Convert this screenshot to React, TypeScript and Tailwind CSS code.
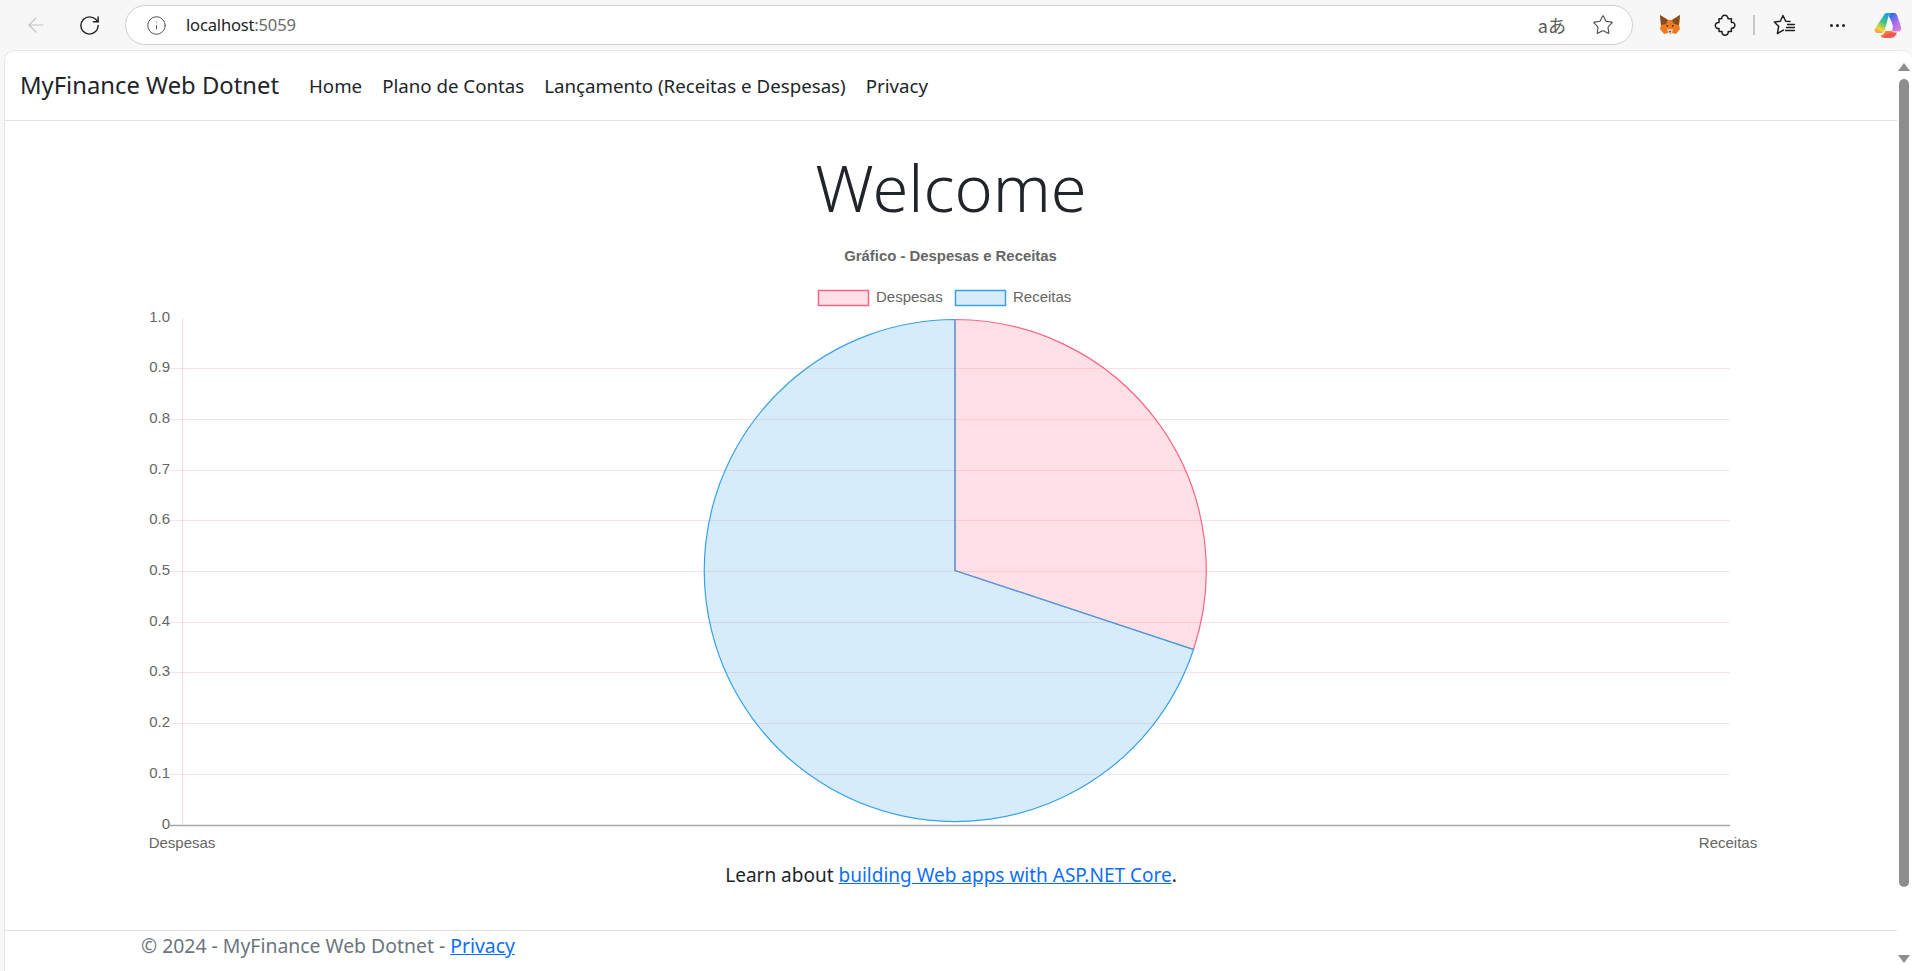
import React from 'react';
import { ArrowLeft, RotateCw, Info, Star } from 'lucide-react';

const ticks = ['1.0', '0.9', '0.8', '0.7', '0.6', '0.5', '0.4', '0.3', '0.2', '0.1', '0'];
const axisTop = 318.5;
const step = 50.7;

const FoxIcon = () => (
  <svg width="22" height="22" viewBox="0 0 22 22">
    <polygon points="1,1 9,6 13,6 21,1 20,11 21,15 17,20 13,19 9,19 5,20 1,15 2,11" fill="#ee7a1e" />
    <polygon points="1,1 9,6 7,10 2,11" fill="#8a4a1f" />
    <polygon points="21,1 13,6 15,10 20,11" fill="#8a4a1f" />
    <polygon points="5,11 9,12 8,15" fill="#f6851b" />
    <polygon points="17,11 13,12 14,15" fill="#f6851b" />
    <polygon points="8,15 14,15 13,19 11,21 9,19" fill="#e4c9b0" />
    <polygon points="10,17 12,17 11,19" fill="#2f2f2f" />
    <polygon points="7,11 9,11 9,13 8,13" fill="#5a3a20" />
    <polygon points="15,11 13,11 13,13 14,13" fill="#5a3a20" />
  </svg>
);

// puzzle piece, bumps on all four sides
const ExtensionIcon = () => (
  <svg width="22" height="22" viewBox="0 0 22 22" fill="none" stroke="#1f1f1f" strokeWidth="1.500" strokeLinejoin="round">
    <path d="M7.600 4.800C7.400 2.800 9 1.300 10.800 1.300s3.400 1.500 3.200 3.500h3.400v3.600c1.900-.4 3.500 1 3.500 2.900s-1.600 3.300-3.500 2.900v3.400h-3.200c.3 2-1.200 3.600-3.100 3.600s-3.400-1.600-3.100-3.600H5v-3.100c-2 .3-3.700-1.100-3.700-3s1.700-3.300 3.700-3V4.800z" />
  </svg>
);

const FavoritesIcon = () => (
  <svg width="24" height="22" viewBox="0 0 24 22" fill="none" stroke="#1f1f1f" strokeWidth="1.500" strokeLinejoin="round" strokeLinecap="round">
    <path d="M17 7.500l-4.300-.3L10 1.500 7.300 7.200l-6 .8 4.400 4.200-1.300 7.300 6-3.400" />
    <path d="M14.500 10.500h7M13.500 13.500h8M12.500 16.500h9" strokeWidth="1.300" />
  </svg>
);

const CopilotIcon = () => (
  <svg width="28" height="27" viewBox="0 0 28 27">
    <defs>
      <linearGradient id="copilotA" x1="0.7" y1="0" x2="0.2" y2="1">
        <stop offset="0" stopColor="#1f9bea" />
        <stop offset="0.45" stopColor="#3fc77f" />
        <stop offset="0.8" stopColor="#f3d53a" />
        <stop offset="1" stopColor="#f59a3c" />
      </linearGradient>
      <linearGradient id="copilotB" x1="0.2" y1="0" x2="0.8" y2="1">
        <stop offset="0" stopColor="#1d6fe8" />
        <stop offset="0.5" stopColor="#a56cf2" />
        <stop offset="1" stopColor="#e87fd0" />
      </linearGradient>
      <linearGradient id="copilotC" x1="0" y1="0" x2="1" y2="1">
        <stop offset="0" stopColor="#f7a63c" />
        <stop offset="0.6" stopColor="#f2503f" />
        <stop offset="1" stopColor="#ee6fa8" />
      </linearGradient>
    </defs>
    <path d="M16 1h4c1.500 0 2.600.8 3.200 2.500l3.800 11.500c.8 2.500-.6 4.500-3 4.500h-6l1-5-2-6-2-4z" fill="url(#copilotB)" />
    <path d="M10 3c.6-1.400 1.800-2 3-2h5c-2 .5-3 1.600-3.600 3.500L11 17c-.8 2.300-1.500 4-4.500 4H4c-2.500 0-3.800-2.300-3-4.500z" fill="url(#copilotA)" />
    <path d="M11 19h6.500c.8 1.200 2.800 1.500 5.500 1.500-1 3.500-3 5.500-6 5.500h-6c-2 0-3.500-.8-4.500-2.500 2.200-.2 3.800-1.500 4.500-4.500z" fill="url(#copilotC)" />
    <path d="M15.500 9.500h2.300l-1.900 9.200h-3.400z" fill="#ffffff" />
  </svg>
);

const BrowserBar = () => (
  <div className="h-[50px] flex items-center bg-[#f7f7f7] text-[#1f1f1f]">
    <div className="w-[125px] shrink-0 flex items-center pl-[24px] gap-[30px]">
      <ArrowLeft size={24} strokeWidth={1.2} className="text-[#c4c4c4]" />
      <RotateCw size={23} strokeWidth={1.5} className="text-[#1f1f1f]" />
    </div>
    <div className="w-[1508px] h-[40px] shrink-0 flex items-center bg-white border border-[#cfcfcf] rounded-full pl-[20px] pr-[18px]">
      <Info size={21} strokeWidth={1.1} className="text-[#4a4a4a]" />
      <span className="ml-[19px] text-[16.600px] font-['Noto_Sans',sans-serif] tracking-[-0.2px]">
        localhost<span className="text-[#6b6b6b]">:5059</span>
      </span>
      <span className="ml-auto mr-[26px] text-[18px] leading-none text-[#5a5a5a] font-['Noto_Sans_CJK_JP',sans-serif]">aあ</span>
      <Star size={22} strokeWidth={1.2} className="text-[#4a4a4a]" />
    </div>
    <div className="flex-1 flex items-center pl-[26px]">
      <FoxIcon />
      <div className="ml-[33px]"><ExtensionIcon /></div>
      <div className="ml-[17px] w-[2px] h-[20px] bg-[#c8c8c8]" />
      <div className="ml-[18px]"><FavoritesIcon /></div>
      <span className="ml-[33px] flex gap-[3px]">
        <i className="block w-[3px] h-[3px] rounded-full bg-[#1f1f1f]" />
        <i className="block w-[3px] h-[3px] rounded-full bg-[#1f1f1f]" />
        <i className="block w-[3px] h-[3px] rounded-full bg-[#1f1f1f]" />
      </span>
      <div className="ml-[29px]"><CopilotIcon /></div>
    </div>
  </div>
);

const Chart = () => (
  <svg width="1620" height="640" viewBox="141 235 1620 640" className="block mx-auto font-['Liberation_Sans',sans-serif]">
    <text x="950.500" y="260.500" textAnchor="middle" fontSize="14.900" fontWeight="700" fill="#666">Gráfico - Despesas e Receitas</text>

    <rect x="818.500" y="290.500" width="50" height="15" fill="rgba(255,99,132,0.2)" stroke="rgb(255,99,132)" strokeWidth="1.500" />
    <text x="876" y="302" fontSize="15" fill="#666">Despesas</text>
    <rect x="955.500" y="290.500" width="50" height="15" fill="rgba(54,162,235,0.2)" stroke="rgb(54,162,235)" strokeWidth="1.500" />
    <text x="1013" y="302" fontSize="15" fill="#666">Receitas</text>

    <line x1="182.500" y1="318" x2="182.500" y2="826" stroke="rgba(255,99,132,0.25)" />
    {ticks.map((t, i) => {
      const y = axisTop + i * step;
      return (
        <g key={t}>
          {i > 0 && i < 10 && (
            <line x1="169" y1={Math.round(y) - 0.5} x2="1730" y2={Math.round(y) - 0.5} stroke="rgba(255,99,132,0.2)" />
          )}
          <text x="170" y={y + 3} textAnchor="end" fontSize="15" fill="#666">{t}</text>
        </g>
      );
    })}
    <line x1="169" y1="825.500" x2="1730" y2="825.500" stroke="#a6a6a6" strokeWidth="1.500" />

    <path d="M955 570.500 L955 319.500 A251 251 0 0 1 1193.500 649.500 Z" fill="rgba(255,99,132,0.2)" stroke="rgb(255,99,132)" strokeWidth="1.200" />
    <path d="M955 570.500 L1193.500 649.500 A251 251 0 1 1 955 319.500 Z" fill="rgba(54,162,235,0.2)" stroke="rgb(54,162,235)" strokeWidth="1.200" />

    <text x="182" y="848" textAnchor="middle" fontSize="15" fill="#666">Despesas</text>
    <text x="1728" y="848" textAnchor="middle" fontSize="15" fill="#666">Receitas</text>
  </svg>
);

export default function App() {
  return (
    <div className="h-[971px] overflow-hidden flex flex-col bg-[#f7f7f7] font-['Noto_Sans',sans-serif] text-[#212529]">
      <BrowserBar />
      <div className="h-[921px] ml-[4px] flex bg-white border-l border-t border-[#e6e6e6] rounded-tl-[10px] rounded-tr-[10px] overflow-hidden">
        <div className="flex-1 min-w-0 flex flex-col">
          <nav className="h-[70px] shrink-0 flex items-center border-b border-[#dee2e6] pl-[15px]">
            <a className="text-[23.800px] text-[#212529] mr-[30px]">MyFinance Web Dotnet</a>
            <ul className="flex gap-[20px] text-[18.700px] pt-[1px]">
              <li>Home</li>
              <li>Plano de Contas</li>
              <li>Lançamento (Receitas e Despesas)</li>
              <li>Privacy</li>
            </ul>
          </nav>
          <main className="flex-1 min-h-0 text-center">
            <h1 className="text-[65px] font-light leading-[1.2] mt-[27px] mb-[9px]">Welcome</h1>
            <Chart />
            <p className="text-[19px] mt-[-14px]">
              Learn about <a className="text-[#0d6efd] underline">building Web apps with ASP.NET Core</a>.
            </p>
          </main>
          <footer className="h-[41px] shrink-0 border-t border-[#dee2e6] pl-[136px] text-[19.400px] text-[#6c757d] leading-[30px]">
            © 2024 - MyFinance Web Dotnet - <a className="text-[#0d6efd] underline">Privacy</a>
          </footer>
        </div>
        <div className="w-[15px] shrink-0 flex flex-col items-center bg-white pr-[1px]">
          <div className="mt-[12px] w-0 h-0 border-l-[6px] border-r-[6px] border-b-[8px] border-l-transparent border-r-transparent border-b-[#8d8d8d]" />
          <div className="mt-[8px] w-[10px] h-[808px] rounded-full bg-[#8d8d8d]" />
          <div className="mt-auto mb-[8px] w-0 h-0 border-l-[6px] border-r-[6px] border-t-[8px] border-l-transparent border-r-transparent border-t-[#8d8d8d]" />
        </div>
      </div>
    </div>
  );
}
